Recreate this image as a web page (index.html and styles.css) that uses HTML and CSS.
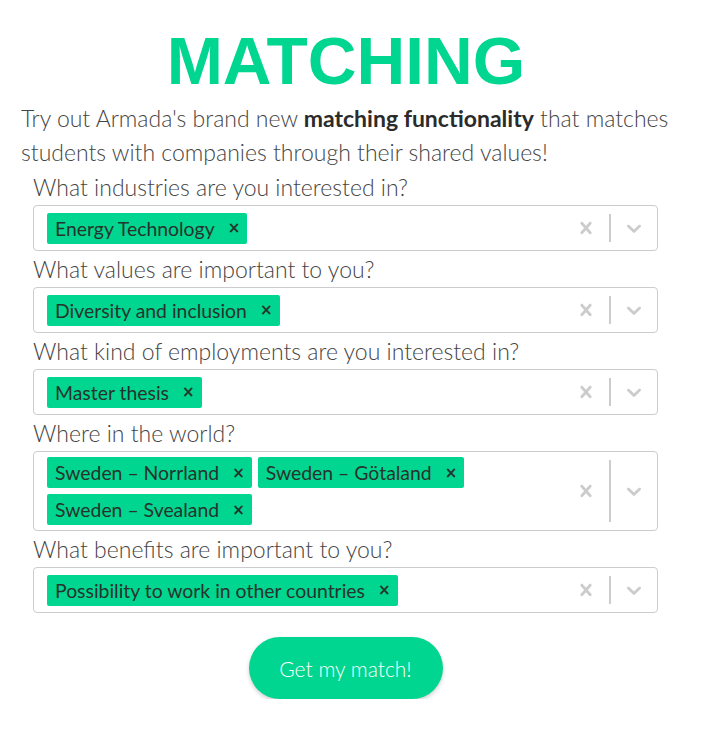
FILE: index.html
```html
<!DOCTYPE html>
<html lang="en">
<head>
<meta charset="utf-8">
<title>Matching</title>
<link rel="stylesheet" href="styles.css">
</head>
<body>
<main class="page">
  <h1 class="title">MATCHING</h1>
  <p class="intro">Try out Armada's brand new <strong>matching functionality</strong> that matches students with companies through their shared values!</p>
  <form class="form">
    <label class="label">What industries are you interested in?</label>
    <div class="select">
      <div class="values">
        <span class="tag"><span class="tag-text">Energy Technology</span><span class="tag-x">×</span></span>
      </div>
      <div class="indicators">
        <span class="ind"><svg viewBox="0 0 20 20" width="24" height="24"><path d="M14.348 14.849c-0.469 0.469-1.229 0.469-1.697 0l-2.651-3.030-2.651 3.029c-0.469 0.469-1.229 0.469-1.697 0-0.469-0.469-0.469-1.229 0-1.697l2.758-3.15-2.759-3.152c-0.469-0.469-0.469-1.228 0-1.697s1.228-0.469 1.697 0l2.652 3.031 2.651-3.031c0.469-0.469 1.228-0.469 1.697 0s0.469 1.229 0 1.697l-2.758 3.152 2.758 3.15c0.469 0.469 0.469 1.229 0 1.698z"/></svg></span>
        <span class="sep"></span>
        <span class="ind"><svg viewBox="0 0 20 20" width="24" height="24"><path d="M4.516 7.548c0.436-0.446 1.043-0.481 1.576 0l3.908 3.747 3.908-3.747c0.533-0.481 1.141-0.446 1.574 0 0.436 0.445 0.408 1.197 0 1.615-0.406 0.418-4.695 4.502-4.695 4.502-0.217 0.223-0.502 0.335-0.787 0.335s-0.57-0.112-0.789-0.335c0 0-4.287-4.084-4.695-4.502s-0.436-1.17 0-1.615z"/></svg></span>
      </div>
    </div>

    <label class="label">What values are important to you?</label>
    <div class="select">
      <div class="values">
        <span class="tag"><span class="tag-text">Diversity and inclusion</span><span class="tag-x">×</span></span>
      </div>
      <div class="indicators">
        <span class="ind"><svg viewBox="0 0 20 20" width="24" height="24"><path d="M14.348 14.849c-0.469 0.469-1.229 0.469-1.697 0l-2.651-3.030-2.651 3.029c-0.469 0.469-1.229 0.469-1.697 0-0.469-0.469-0.469-1.229 0-1.697l2.758-3.15-2.759-3.152c-0.469-0.469-0.469-1.228 0-1.697s1.228-0.469 1.697 0l2.652 3.031 2.651-3.031c0.469-0.469 1.228-0.469 1.697 0s0.469 1.229 0 1.697l-2.758 3.152 2.758 3.15c0.469 0.469 0.469 1.229 0 1.698z"/></svg></span>
        <span class="sep"></span>
        <span class="ind"><svg viewBox="0 0 20 20" width="24" height="24"><path d="M4.516 7.548c0.436-0.446 1.043-0.481 1.576 0l3.908 3.747 3.908-3.747c0.533-0.481 1.141-0.446 1.574 0 0.436 0.445 0.408 1.197 0 1.615-0.406 0.418-4.695 4.502-4.695 4.502-0.217 0.223-0.502 0.335-0.787 0.335s-0.57-0.112-0.789-0.335c0 0-4.287-4.084-4.695-4.502s-0.436-1.17 0-1.615z"/></svg></span>
      </div>
    </div>

    <label class="label">What kind of employments are you interested in?</label>
    <div class="select">
      <div class="values">
        <span class="tag"><span class="tag-text">Master thesis</span><span class="tag-x">×</span></span>
      </div>
      <div class="indicators">
        <span class="ind"><svg viewBox="0 0 20 20" width="24" height="24"><path d="M14.348 14.849c-0.469 0.469-1.229 0.469-1.697 0l-2.651-3.030-2.651 3.029c-0.469 0.469-1.229 0.469-1.697 0-0.469-0.469-0.469-1.229 0-1.697l2.758-3.15-2.759-3.152c-0.469-0.469-0.469-1.228 0-1.697s1.228-0.469 1.697 0l2.652 3.031 2.651-3.031c0.469-0.469 1.228-0.469 1.697 0s0.469 1.229 0 1.697l-2.758 3.152 2.758 3.15c0.469 0.469 0.469 1.229 0 1.698z"/></svg></span>
        <span class="sep"></span>
        <span class="ind"><svg viewBox="0 0 20 20" width="24" height="24"><path d="M4.516 7.548c0.436-0.446 1.043-0.481 1.576 0l3.908 3.747 3.908-3.747c0.533-0.481 1.141-0.446 1.574 0 0.436 0.445 0.408 1.197 0 1.615-0.406 0.418-4.695 4.502-4.695 4.502-0.217 0.223-0.502 0.335-0.787 0.335s-0.57-0.112-0.789-0.335c0 0-4.287-4.084-4.695-4.502s-0.436-1.17 0-1.615z"/></svg></span>
      </div>
    </div>

    <label class="label">Where in the world?</label>
    <div class="select">
      <div class="values">
        <span class="tag"><span class="tag-text">Sweden – Norrland</span><span class="tag-x">×</span></span>
        <span class="tag"><span class="tag-text">Sweden – Götaland</span><span class="tag-x">×</span></span>
        <span class="tag"><span class="tag-text">Sweden – Svealand</span><span class="tag-x">×</span></span>
      </div>
      <div class="indicators">
        <span class="ind"><svg viewBox="0 0 20 20" width="24" height="24"><path d="M14.348 14.849c-0.469 0.469-1.229 0.469-1.697 0l-2.651-3.030-2.651 3.029c-0.469 0.469-1.229 0.469-1.697 0-0.469-0.469-0.469-1.229 0-1.697l2.758-3.15-2.759-3.152c-0.469-0.469-0.469-1.228 0-1.697s1.228-0.469 1.697 0l2.652 3.031 2.651-3.031c0.469-0.469 1.228-0.469 1.697 0s0.469 1.229 0 1.697l-2.758 3.152 2.758 3.150c0.469 0.469 0.469 1.229 0 1.698z"/></svg></span>
        <span class="sep"></span>
        <span class="ind"><svg viewBox="0 0 20 20" width="24" height="24"><path d="M4.516 7.548c0.436-0.446 1.043-0.481 1.576 0l3.908 3.747 3.908-3.747c0.533-0.481 1.141-0.446 1.574 0 0.436 0.445 0.408 1.197 0 1.615-0.406 0.418-4.695 4.502-4.695 4.502-0.217 0.223-0.502 0.335-0.787 0.335s-0.57-0.112-0.789-0.335c0 0-4.287-4.084-4.695-4.502s-0.436-1.17 0-1.615z"/></svg></span>
      </div>
    </div>

    <label class="label">What benefits are important to you?</label>
    <div class="select">
      <div class="values">
        <span class="tag"><span class="tag-text">Possibility to work in other countries</span><span class="tag-x">×</span></span>
      </div>
      <div class="indicators">
        <span class="ind"><svg viewBox="0 0 20 20" width="24" height="24"><path d="M14.348 14.849c-0.469 0.469-1.229 0.469-1.697 0l-2.651-3.030-2.651 3.029c-0.469 0.469-1.229 0.469-1.697 0-0.469-0.469-0.469-1.229 0-1.697l2.758-3.15-2.759-3.152c-0.469-0.469-0.469-1.228 0-1.697s1.228-0.469 1.697 0l2.652 3.031 2.651-3.031c0.469-0.469 1.228-0.469 1.697 0s0.469 1.229 0 1.697l-2.758 3.152 2.758 3.15c0.469 0.469 0.469 1.229 0 1.698z"/></svg></span>
        <span class="sep"></span>
        <span class="ind"><svg viewBox="0 0 20 20" width="24" height="24"><path d="M4.516 7.548c0.436-0.446 1.043-0.481 1.576 0l3.908 3.747 3.908-3.747c0.533-0.481 1.141-0.446 1.574 0 0.436 0.445 0.408 1.197 0 1.615-0.406 0.418-4.695 4.502-4.695 4.502-0.217 0.223-0.502 0.335-0.787 0.335s-0.57-0.112-0.789-0.335c0 0-4.287-4.084-4.695-4.502s-0.436-1.17 0-1.615z"/></svg></span>
      </div>
    </div>

    <div class="actions">
      <button type="button" class="button">Get my match!</button>
    </div>
  </form>
</main>
</body>
</html>
```

FILE: styles.css
```css
html, body {
  margin: 0;
  padding: 0;
  background: #ffffff;
}

body {
  font-family: Lato, "Open Sans", sans-serif;
  color: #333333;
}

.page {
  width: 650px;
  padding: 0 0 0 21px;
  display: flex;
  flex-direction: column;
}

.title {
  margin: 23px 0 3px 0;
  font-family: "Liberation Sans", Arial, sans-serif;
  font-weight: 700;
  font-size: 67.5px;
  line-height: 75px;
  color: #00d68f;
  text-align: center;
}

.intro {
  margin: 0 -10px 0 0;
  font-family: "Lato Light", Lato, "Open Sans", sans-serif;
  font-size: 23px;
  font-weight: 300;
  line-height: 34px;
  color: #444444;
}

.intro strong {
  font-family: Lato, "Open Sans", sans-serif;
  font-weight: 700;
  color: #2b2b2b;
}

.form {
  display: flex;
  flex-direction: column;
  margin: 0 13px 0 12px;
}

.label {
  font-family: "Lato Light", Lato, "Open Sans", sans-serif;
  font-size: 23px;
  font-weight: 300;
  line-height: 36px;
  color: #444444;
}

.select {
  display: flex;
  align-items: stretch;
  border: 1px solid #cccccc;
  border-radius: 4px;
  background: #ffffff;
  min-height: 44px;
}

.values {
  flex: 1;
  display: flex;
  flex-wrap: wrap;
  align-items: center;
  align-content: center;
  padding: 2px 10px 2px 10px;
}

.tag {
  display: inline-flex;
  align-items: center;
  height: 31px;
  margin: 3px;
  padding: 0 7px 0 8px;
  background: #00d68f;
  border-radius: 2px;
  font-size: 19.4px;
  font-weight: 400;
  color: #26332d;
}

.tag-text {
  line-height: 31px;
}

.tag-x {
  margin-left: 13px;
  font-family: "DejaVu Sans", sans-serif;
  font-size: 15px;
  font-weight: 700;
  color: #26332d;
}

.indicators {
  display: flex;
  align-items: stretch;
}

.ind {
  display: flex;
  align-items: center;
  padding: 0 11px;
}

.ind svg {
  fill: #cccccc;
  display: block;
}

.sep {
  width: 2px;
  background: #cccccc;
  margin: 8px 0;
}

.actions {
  display: flex;
  justify-content: center;
  margin-top: 24px;
}

.button {
  width: 194px;
  height: 62px;
  border: none;
  border-radius: 31px;
  background: #00d68f;
  color: #ffffff;
  font-family: "Lato Light", Lato, "Open Sans", sans-serif;
  font-size: 21px;
  font-weight: 300;
  box-shadow: 0 2px 4px rgba(0, 0, 0, 0.2);
  cursor: pointer;
}
```
